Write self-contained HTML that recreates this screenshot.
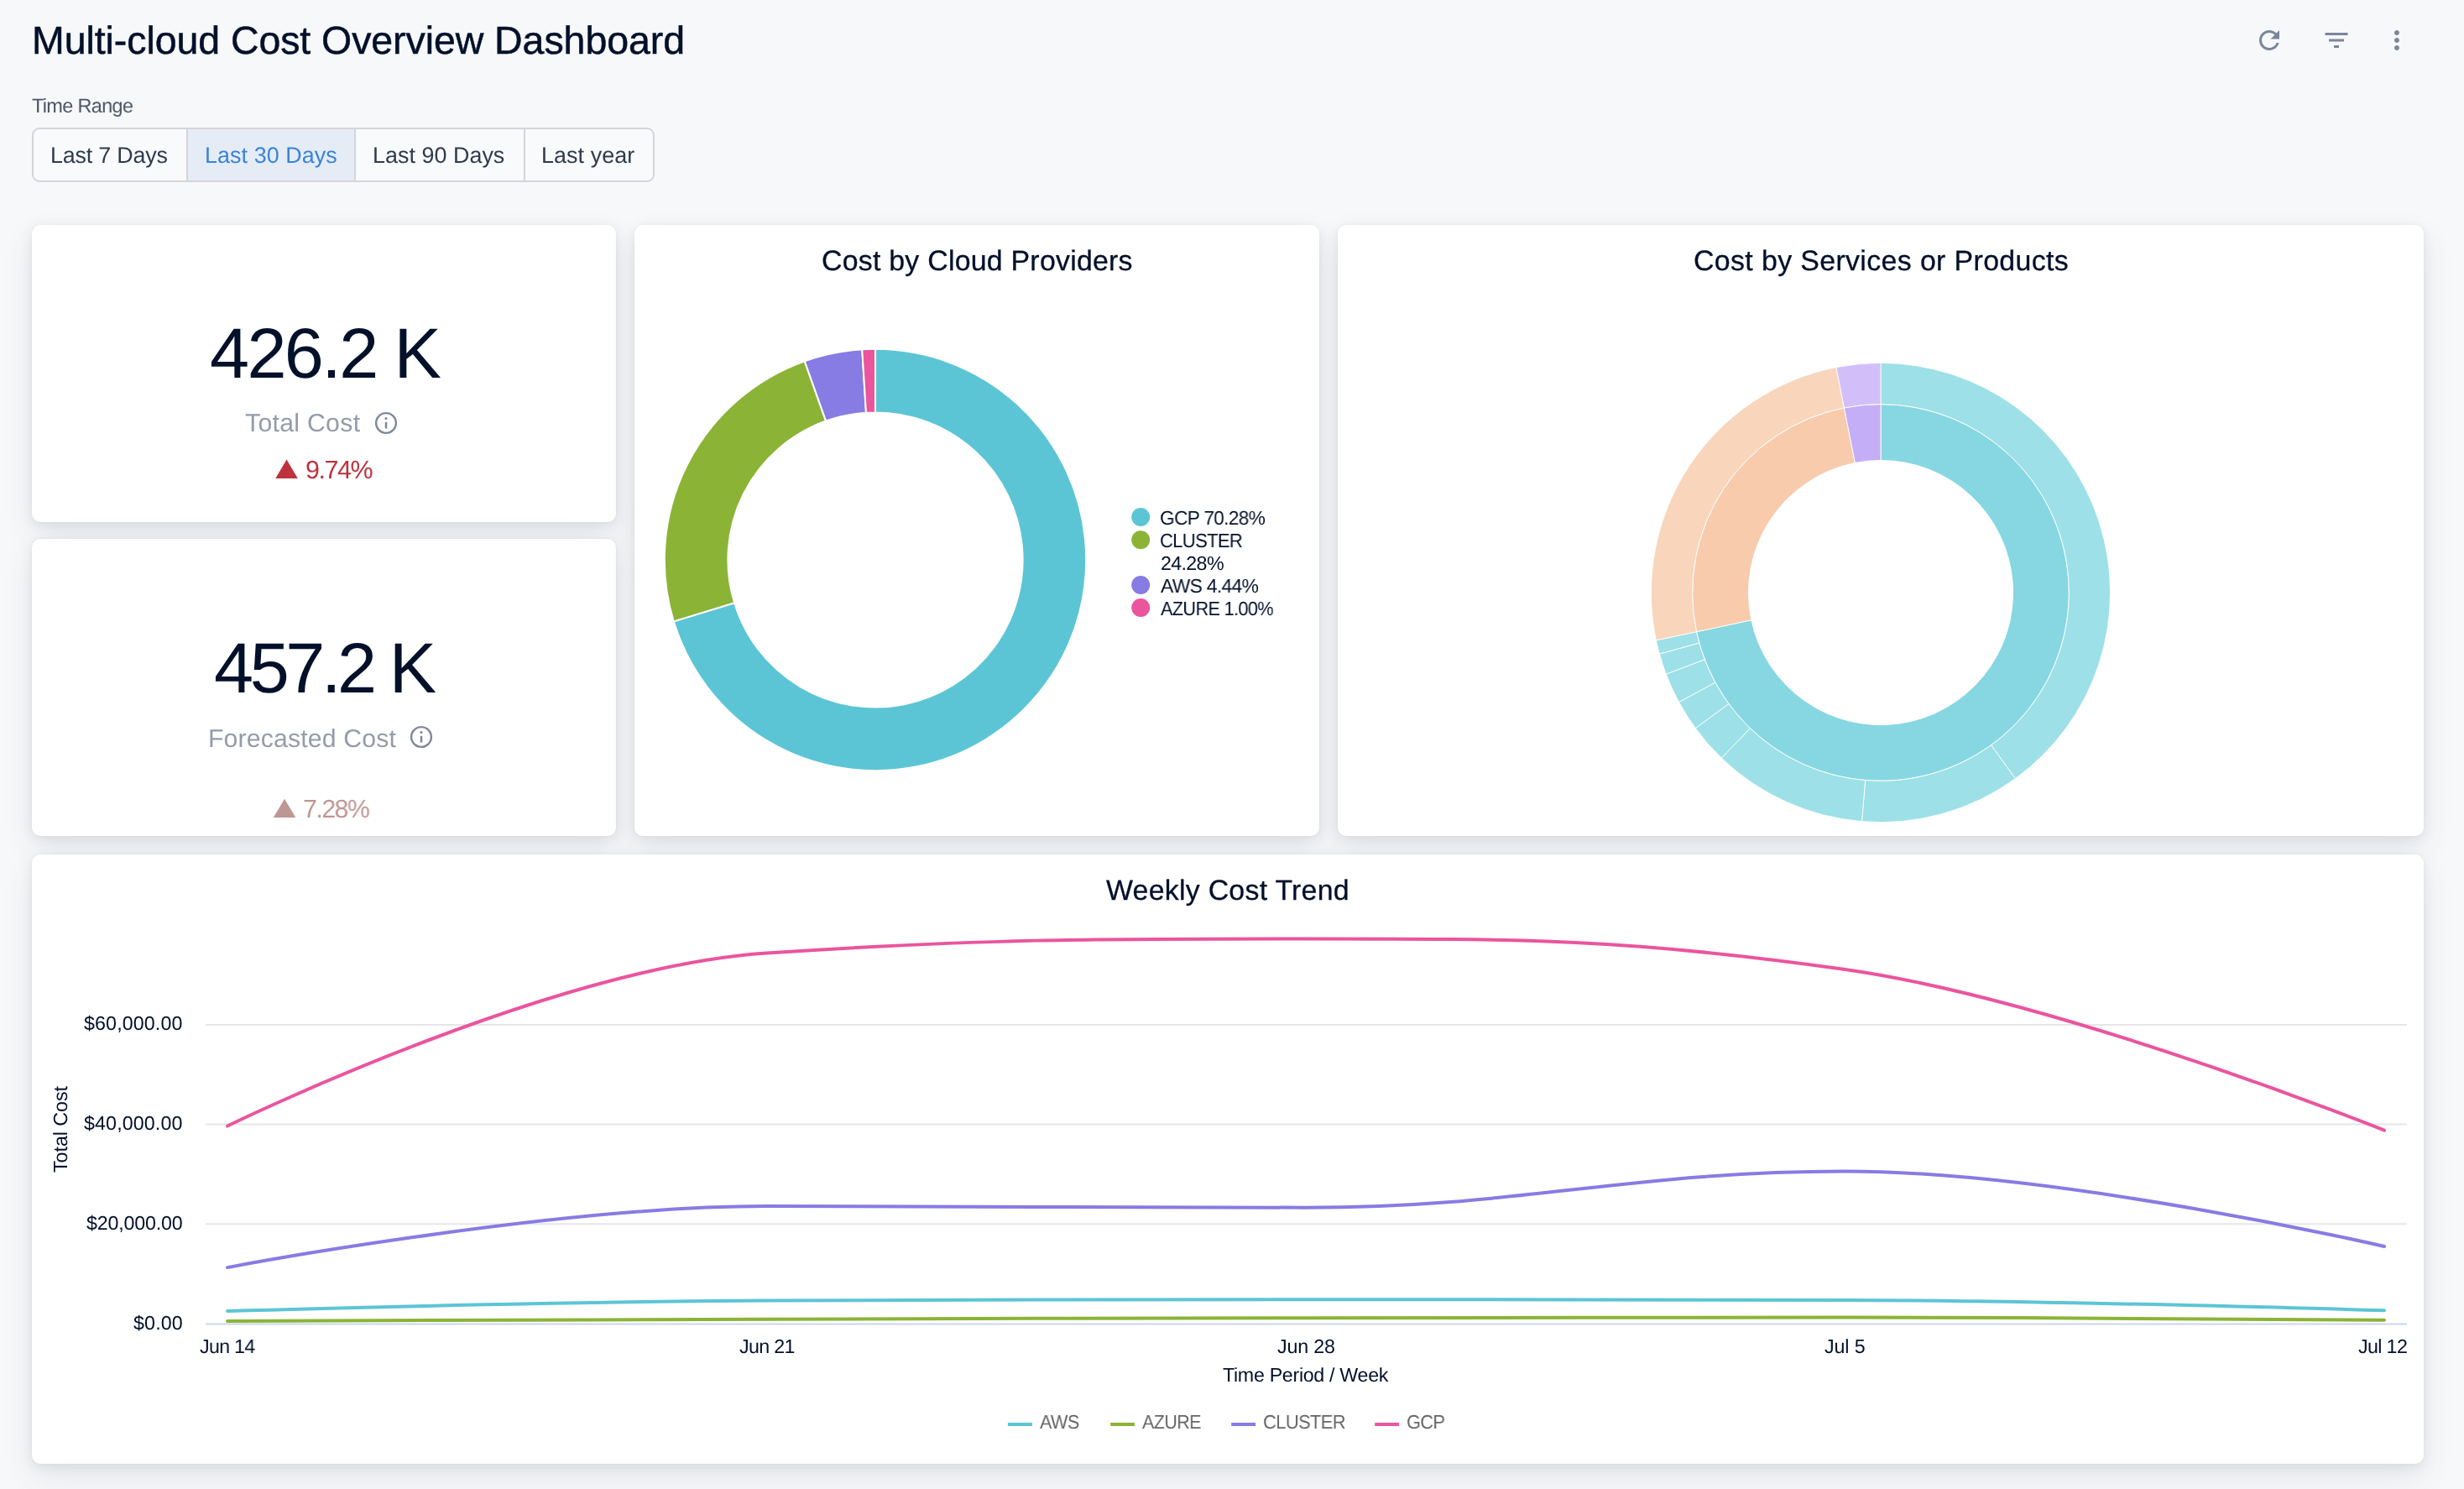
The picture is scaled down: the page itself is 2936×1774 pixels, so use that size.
<!DOCTYPE html>
<html lang="en"><head><meta charset="utf-8"><title>Multi-cloud Cost Overview Dashboard</title>
<style>
*{box-sizing:border-box;margin:0;padding:0}
html,body{width:2936px;height:1774px;overflow:hidden;background:#f7f8fa}
body{position:relative;font-family:"Liberation Sans",sans-serif}
.t{will-change:transform;text-rendering:geometricPrecision;position:absolute;white-space:pre;font-family:"Liberation Sans",sans-serif;font-weight:400}
.card{position:absolute;background:#fff;border-radius:10px;box-shadow:0 0 3px rgba(40,41,50,.04),0 3px 14px rgba(76,80,84,.10),0 16px 36px rgba(76,80,84,.10)}
.abs{position:absolute}
svg{position:absolute;left:0;top:0;overflow:visible}
.seg{position:absolute;left:38px;top:152px;width:742px;height:65px;border:2px solid #d3d5da;border-radius:9px;background:#f9fafb;overflow:hidden}
.seg i{position:absolute;top:0;height:61px;width:2px;background:#d3d5da}
.seg b{position:absolute;top:0;height:61px;background:#e5ecf6}
</style></head><body>

<header>
<span class="t" style="left:37.89px;top:22px;font-size:46.51px;line-height:52px;letter-spacing:-0.072px;color:#03102a;-webkit-text-stroke:0.5px #03102a;">Multi-cloud Cost Overview Dashboard</span>
<svg width="2936" height="100" viewBox="0 0 2936 100" fill="#7b869b">
<g transform="translate(2686,30) scale(1.5)"><path d="M17.65 6.35C16.2 4.9 14.21 4 12 4c-4.42 0-7.99 3.58-7.99 8s3.57 8 7.99 8c3.73 0 6.84-2.55 7.73-6h-2.08c-.82 2.33-3.04 4-5.65 4-3.31 0-6-2.69-6-6s2.690-6 6-6c1.66 0 3.14.69 4.22 1.78L13 11h7V4l-2.35 2.35z"/></g>
<g transform="translate(2766,30) scale(1.5)"><path d="M10 18h4v-2h-4v2zM3 6v2h18V6H3zm3 7h12v-2H6v2z"/></g>
<g transform="translate(2838,30) scale(1.5)"><path d="M12 8c1.1 0 2-.9 2-2s-.9-2-2-2-2 .9-2 2 .9 2 2 2zm0 2c-1.1 0-2 .9-2 2s.9 2 2 2 2-.9 2-2-.9-2-2-2zm0 6c-1.1 0-2 .9-2 2s.9 2 2 2 2-.9 2-2-.9-2-2-2z"/></g>
</svg>
</header>
<section>
<span class="t" style="left:38.28px;top:113px;font-size:23.55px;line-height:26px;letter-spacing:-0.706px;color:#4d5566;transform:scaleX(0.9985);transform-origin:0 0;">Time Range</span>
<div class="seg"><b style="left:184px;width:198px"></b><i style="left:182px"></i><i style="left:382px"></i><i style="left:584px"></i></div>
<span class="t" style="left:60.30px;top:170px;font-size:26.89px;line-height:30px;letter-spacing:-0.200px;color:#2f3a4e;">Last 7 Days</span>
<span class="t" style="left:243.70px;top:170px;font-size:26.89px;line-height:30px;letter-spacing:0.077px;color:#3b83d7;">Last 30 Days</span>
<span class="t" style="left:444.20px;top:170px;font-size:26.89px;line-height:30px;letter-spacing:0.041px;color:#2f3a4e;">Last 90 Days</span>
<span class="t" style="left:645.10px;top:170px;font-size:26.89px;line-height:30px;letter-spacing:0.092px;color:#2f3a4e;">Last year</span>
</section>
<section class="card" aria-label="Total Cost" style="left:38px;top:268px;width:696px;height:354px">
<span class="t" style="left:211.94px;top:105px;font-size:84.59px;line-height:95px;letter-spacing:-2.617px;color:#03102a;">426.2 K</span>
<span class="t" style="left:254.33px;top:220px;font-size:30.23px;line-height:33px;letter-spacing:0.296px;color:#959baa;">Total Cost</span>
<svg width="2936" height="1774" style="left:-38px;top:-268px"><circle cx="460" cy="504" r="11.9" fill="none" stroke="#7f8798" stroke-width="2.4"/><rect x="458.75" y="502.8" width="2.5" height="7.7" fill="#7f8798"/><circle cx="460" cy="498.5" r="1.6" fill="#7f8798"/></svg>
<svg width="2936" height="1774" style="left:-38px;top:-268px"><path d="M341.55 547.4L354.8 569.9L328.3 569.9Z" fill="#be323e"/></svg>
<span class="t" style="left:326.20px;top:275px;font-size:30.52px;line-height:34px;letter-spacing:-1.465px;color:#be323e;">9.74%</span>
</section>
<section class="card" aria-label="Forecasted Cost" style="left:38px;top:642px;width:696px;height:354px">
<span class="t" style="left:217.14px;top:106px;font-size:84.59px;line-height:95px;letter-spacing:-4.383px;color:#03102a;">457.2 K</span>
<span class="t" style="left:210.22px;top:222px;font-size:30.23px;line-height:33px;letter-spacing:0.155px;color:#959baa;">Forecasted Cost</span>
<svg width="2936" height="1774" style="left:-38px;top:-642px"><circle cx="502" cy="878" r="11.9" fill="none" stroke="#7f8798" stroke-width="2.4"/><rect x="500.75" y="876.8" width="2.5" height="7.7" fill="#7f8798"/><circle cx="502" cy="872.5" r="1.6" fill="#7f8798"/></svg>
<svg width="2936" height="1774" style="left:-38px;top:-642px"><path d="M339.05 951.7L352.3 974L325.8 974Z" fill="#be9693"/></svg>
<span class="t" style="left:322.85px;top:305px;font-size:30.52px;line-height:34px;letter-spacing:-1.526px;color:#be9693;transform:scaleX(0.9935);transform-origin:0 0;">7.28%</span>
</section>
<section class="card" aria-label="Cost by Cloud Providers" style="left:756px;top:268px;width:816px;height:728px">
<span class="t" style="left:222.61px;top:24px;font-size:33.87px;line-height:38px;letter-spacing:0.248px;color:#03102a;-webkit-text-stroke:0.3px #03102a;">Cost by Cloud Providers</span>
<svg width="2936" height="1774" style="left:-756px;top:-268px">
<path d="M1043.00 415.80A251.2 251.2 0 1 1 802.77 740.41L875.07 718.32A175.6 175.6 0 1 0 1043.00 491.40Z" fill="#5cc5d5" stroke="#fff" stroke-width="2" stroke-linejoin="round"/>
<path d="M802.77 740.41A251.2 251.2 0 0 1 958.80 430.33L984.14 501.56A175.6 175.6 0 0 0 875.07 718.32Z" fill="#8bb436" stroke="#fff" stroke-width="2" stroke-linejoin="round"/>
<path d="M958.80 430.33A251.2 251.2 0 0 1 1027.23 416.30L1031.97 491.75A175.6 175.6 0 0 0 984.14 501.56Z" fill="#877be4" stroke="#fff" stroke-width="2" stroke-linejoin="round"/>
<path d="M1027.23 416.30A251.2 251.2 0 0 1 1043.00 415.80L1043.00 491.40A175.6 175.6 0 0 0 1031.97 491.75Z" fill="#ea559e" stroke="#fff" stroke-width="2" stroke-linejoin="round"/>
<circle cx="1359.2" cy="616" r="11" fill="#5cc5d5"/>
<circle cx="1359.2" cy="643.2" r="11" fill="#8bb436"/>
<circle cx="1359.2" cy="697" r="11" fill="#877be4"/>
<circle cx="1359.2" cy="724" r="11" fill="#ea559e"/>
</svg>
<span class="t" style="left:626.37px;top:336px;font-size:23.26px;line-height:26px;letter-spacing:-0.698px;color:#03102a;transform:scaleX(0.9760);transform-origin:0 0;">GCP 70.28%</span>
<span class="t" style="left:626.40px;top:363px;font-size:23.26px;line-height:26px;letter-spacing:-0.698px;color:#03102a;transform:scaleX(0.9470);transform-origin:0 0;">CLUSTER</span>
<span class="t" style="left:626.64px;top:390px;font-size:23.26px;line-height:26px;letter-spacing:-0.657px;color:#03102a;">24.28%</span>
<span class="t" style="left:627.25px;top:417px;font-size:23.26px;line-height:26px;letter-spacing:-0.698px;color:#03102a;transform:scaleX(0.9825);transform-origin:0 0;">AWS 4.44%</span>
<span class="t" style="left:627.26px;top:444px;font-size:23.26px;line-height:26px;letter-spacing:-0.698px;color:#03102a;transform:scaleX(0.9332);transform-origin:0 0;">AZURE 1.00%</span>
</section>
<section class="card" aria-label="Cost by Services or Products" style="left:1594px;top:268px;width:1294px;height:728px">
<span class="t" style="left:423.51px;top:24px;font-size:33.87px;line-height:38px;letter-spacing:0.379px;color:#03102a;-webkit-text-stroke:0.3px #03102a;">Cost by Services or Products</span>
<svg width="2936" height="1774" style="left:-1594px;top:-268px" stroke="#fff" stroke-width="0.9" stroke-linejoin="round">
<path d="M2241.00 481.60A224.4 224.4 0 1 1 2021.50 752.66L2086.84 738.77A157.6 157.6 0 1 0 2241.00 548.40Z" fill="#87d7e2"/>
<path d="M2021.50 752.66A224.4 224.4 0 0 1 2197.41 485.87L2210.39 551.40A157.6 157.6 0 0 0 2086.84 738.77Z" fill="#f7cbac"/>
<path d="M2197.41 485.87A224.4 224.4 0 0 1 2241.00 481.60L2241.00 548.40A157.6 157.6 0 0 0 2210.39 551.40Z" fill="#c4aef7"/>
<path d="M2241.00 432.40A273.6 273.6 0 0 1 2401.43 927.63L2372.58 887.77A224.4 224.4 0 0 0 2241.00 481.60Z" fill="#9de0e7"/>
<path d="M2401.43 927.63A273.6 273.6 0 0 1 2218.58 978.68L2222.61 929.65A224.4 224.4 0 0 0 2372.58 887.77Z" fill="#9de0e7"/>
<path d="M2218.58 978.68A273.6 273.6 0 0 1 2051.29 903.14L2085.40 867.69A224.4 224.4 0 0 0 2222.61 929.65Z" fill="#9de0e7"/>
<path d="M2051.29 903.14A273.6 273.6 0 0 1 2020.22 867.59L2059.92 838.53A224.4 224.4 0 0 0 2085.40 867.69Z" fill="#9de0e7"/>
<path d="M2020.22 867.59A273.6 273.6 0 0 1 2000.56 836.55L2043.79 813.07A224.4 224.4 0 0 0 2059.92 838.53Z" fill="#9de0e7"/>
<path d="M2000.56 836.55A273.6 273.6 0 0 1 1985.23 803.16L2031.23 785.69A224.4 224.4 0 0 0 2043.79 813.07Z" fill="#9de0e7"/>
<path d="M1985.23 803.16A273.6 273.6 0 0 1 1977.35 779.12L2024.76 765.97A224.4 224.4 0 0 0 2031.23 785.69Z" fill="#9de0e7"/>
<path d="M1977.35 779.12A273.6 273.6 0 0 1 1973.38 762.88L2021.50 752.66A224.4 224.4 0 0 0 2024.76 765.97Z" fill="#9de0e7"/>
<path d="M1973.38 762.88A273.6 273.6 0 0 1 2187.86 437.61L2197.41 485.87A224.4 224.4 0 0 0 2021.50 752.66Z" fill="#f8d5bb"/>
<path d="M2187.86 437.61A273.6 273.6 0 0 1 2241.00 432.40L2241.00 481.60A224.4 224.4 0 0 0 2197.41 485.87Z" fill="#d2bffa"/>
</svg>
</section>
<section class="card" aria-label="Weekly Cost Trend" style="left:38px;top:1018px;width:2850px;height:726px">
<span class="t" style="left:1280.46px;top:24px;font-size:33.87px;line-height:38px;letter-spacing:0.265px;color:#03102a;-webkit-text-stroke:0.3px #03102a;">Weekly Cost Trend</span>
<svg width="2936" height="1774" style="left:-38px;top:-1018px" fill="none">
<path d="M245 1221H2868" stroke="#e6e6e6" stroke-width="2"/>
<path d="M245 1339.5H2868" stroke="#e6e6e6" stroke-width="2"/>
<path d="M245 1458.2H2868" stroke="#e6e6e6" stroke-width="2"/>
<path d="M245 1577.4H2868" stroke="#ccd6eb" stroke-width="2"/>
<path d="M271.00 1562.00C271.00 1562.00 656.50 1550.70 913.50 1549.50C1170.50 1548.30 1299.00 1548.30 1556.00 1548.30C1813.00 1548.30 1941.50 1548.30 2198.50 1548.90C2455.50 1549.50 2841.00 1561.30 2841.00 1561.30" stroke="#5cc5d5" stroke-width="4" stroke-linecap="round" stroke-linejoin="round"/>
<path d="M271.00 1574.00C271.00 1574.00 656.50 1572.46 913.50 1571.70C1170.50 1570.94 1299.00 1570.62 1556.00 1570.20C1813.00 1569.78 1941.50 1569.60 2198.50 1569.60C2455.50 1569.60 2841.00 1572.80 2841.00 1572.80" stroke="#8bb436" stroke-width="4" stroke-linecap="round" stroke-linejoin="round"/>
<path d="M271.00 1510.10C271.00 1510.10 656.50 1437.10 913.50 1437.10C1170.50 1437.10 1299.00 1438.70 1556.00 1438.70C1813.00 1438.70 1941.50 1395.50 2198.50 1395.50C2455.50 1395.50 2841.00 1485.00 2841.00 1485.00" stroke="#877be4" stroke-width="4" stroke-linecap="round" stroke-linejoin="round"/>
<path d="M271.00 1341.50C271.00 1341.50 656.50 1152.50 913.50 1135.50C1170.50 1118.50 1299.00 1118.50 1556.00 1118.50C1813.00 1118.50 1941.50 1118.50 2198.50 1155.00C2455.50 1191.50 2841.00 1346.70 2841.00 1346.70" stroke="#ea559e" stroke-width="4" stroke-linecap="round" stroke-linejoin="round"/>
<path d="M1200.9 1697H1229.9" stroke="#5cc5d5" stroke-width="4"/>
<path d="M1323.1 1697H1352" stroke="#8bb436" stroke-width="4"/>
<path d="M1467.2 1697H1496.1" stroke="#877be4" stroke-width="4"/>
<path d="M1638.2 1697H1667.1" stroke="#ea559e" stroke-width="4"/>
</svg>
<span class="t" style="left:62.07px;top:188px;font-size:23.26px;line-height:26px;letter-spacing:0.113px;color:#03102a;">$60,000.00</span>
<span class="t" style="left:62.07px;top:307px;font-size:23.26px;line-height:26px;letter-spacing:0.113px;color:#03102a;">$40,000.00</span>
<span class="t" style="left:64.77px;top:426px;font-size:23.26px;line-height:26px;letter-spacing:-0.187px;color:#03102a;">$20,000.00</span>
<span class="t" style="left:120.77px;top:545px;font-size:23.26px;line-height:26px;letter-spacing:0.133px;color:#03102a;">$0.00</span>
<span class="t" style="left:200.15px;top:573px;font-size:23.26px;line-height:26px;letter-spacing:-0.698px;color:#03102a;transform:scaleX(0.9954);transform-origin:0 0;">Jun 14</span>
<span class="t" style="left:842.65px;top:573px;font-size:23.26px;line-height:26px;letter-spacing:-0.670px;color:#03102a;">Jun 21</span>
<span class="t" style="left:1483.90px;top:573px;font-size:23.26px;line-height:26px;letter-spacing:-0.193px;color:#03102a;">Jun 28</span>
<span class="t" style="left:2136.45px;top:573px;font-size:23.26px;line-height:26px;letter-spacing:-0.103px;color:#03102a;">Jul 5</span>
<span class="t" style="left:2772.35px;top:573px;font-size:23.26px;line-height:26px;letter-spacing:-0.647px;color:#03102a;">Jul 12</span>
<span class="t" style="left:1419.49px;top:607px;font-size:23.26px;line-height:26px;letter-spacing:-0.320px;color:#03102a;">Time Period / Week</span>
<div class="abs" style="left:34.8px;top:327.29999999999995px;width:0;height:0;transform:rotate(-90deg)"><span class="t" style="left:-51.71px;top:-14px;font-size:23.26px;line-height:26px;letter-spacing:-0.036px;color:#03102a;">Total Cost</span></div>
<span class="t" style="left:1200.96px;top:663px;font-size:23.11px;line-height:26px;letter-spacing:-0.693px;color:#666666;transform:scaleX(0.9388);transform-origin:0 0;">AWS</span>
<span class="t" style="left:1323.36px;top:663px;font-size:23.11px;line-height:26px;letter-spacing:-0.693px;color:#666666;transform:scaleX(0.9312);transform-origin:0 0;">AZURE</span>
<span class="t" style="left:1466.80px;top:663px;font-size:23.11px;line-height:26px;letter-spacing:-0.693px;color:#666666;transform:scaleX(0.9509);transform-origin:0 0;">CLUSTER</span>
<span class="t" style="left:1637.51px;top:663px;font-size:23.11px;line-height:26px;letter-spacing:-0.693px;color:#666666;transform:scaleX(0.9431);transform-origin:0 0;">GCP</span>
</section>
</body></html>
